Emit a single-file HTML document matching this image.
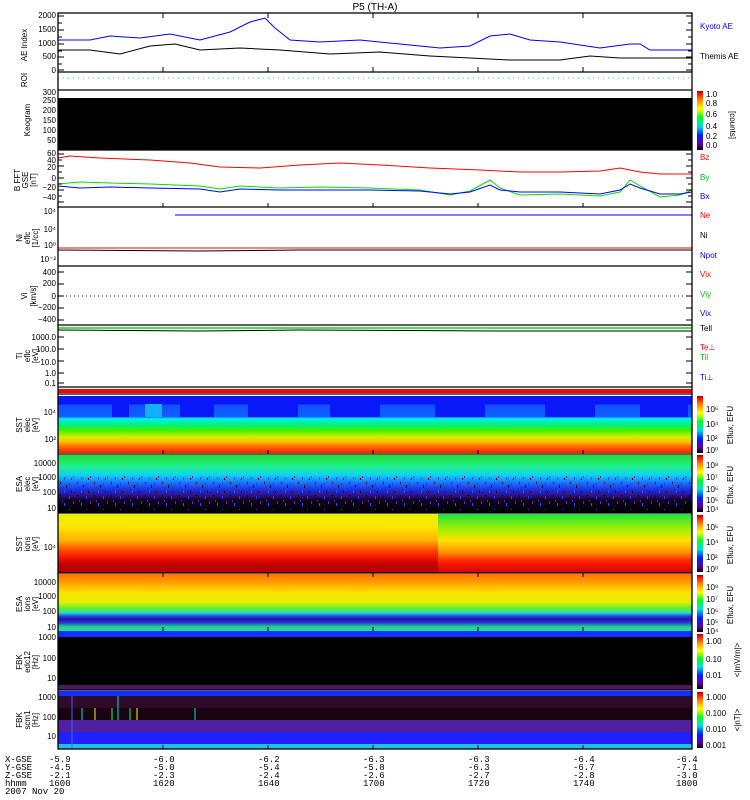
<!DOCTYPE html><html><head><style>body{margin:0;background:#fff}svg{display:block;font-family:"Liberation Sans",sans-serif}</style></head><body>
<svg width="750" height="800" viewBox="0 0 750 800" xmlns="http://www.w3.org/2000/svg">
<defs>
<linearGradient id="cb" x1="0" y1="1" x2="0" y2="0"><stop offset="0" stop-color="#000"/><stop offset=".1" stop-color="#6000a0"/><stop offset=".25" stop-color="#0020ff"/><stop offset=".4" stop-color="#00e0e0"/><stop offset=".55" stop-color="#00ff20"/><stop offset=".7" stop-color="#ffff00"/><stop offset=".85" stop-color="#ff8000"/><stop offset=".97" stop-color="#ff0000"/><stop offset="1" stop-color="#800000"/></linearGradient>
<linearGradient id="sst1" x1="0" y1="0" x2="0" y2="1"><stop offset="0" stop-color="#0818f8"/><stop offset=".14" stop-color="#0818f8"/><stop offset=".16" stop-color="#1050ff"/><stop offset=".36" stop-color="#1060ff"/><stop offset=".4" stop-color="#00f0f0"/><stop offset=".5" stop-color="#00f080"/><stop offset=".6" stop-color="#40f000"/><stop offset=".72" stop-color="#d0f000"/><stop offset=".8" stop-color="#ffc000"/><stop offset=".9" stop-color="#ff6000"/><stop offset="1" stop-color="#ff2000"/></linearGradient>
<linearGradient id="esa1" x1="0" y1="0" x2="0" y2="1"><stop offset="0" stop-color="#20e030"/><stop offset=".2" stop-color="#20f090"/><stop offset=".35" stop-color="#10d0f0"/><stop offset=".48" stop-color="#2070ff"/><stop offset=".6" stop-color="#1830e0"/><stop offset=".7" stop-color="#301080"/><stop offset=".78" stop-color="#100420"/><stop offset="1" stop-color="#000"/></linearGradient>
<linearGradient id="sst2" x1="0" y1="0" x2="0" y2="1"><stop offset="0" stop-color="#e8f000"/><stop offset=".2" stop-color="#ffe800"/><stop offset=".45" stop-color="#ffb000"/><stop offset=".6" stop-color="#ff5000"/><stop offset=".75" stop-color="#f01000"/><stop offset=".85" stop-color="#c00000"/><stop offset="1" stop-color="#b00000"/></linearGradient>
<linearGradient id="sst2b" x1="0" y1="0" x2="0" y2="1"><stop offset="0" stop-color="#20e040"/><stop offset=".25" stop-color="#a0f000"/><stop offset=".45" stop-color="#ffe000"/><stop offset=".65" stop-color="#ff9000"/><stop offset=".8" stop-color="#ff2000"/><stop offset="1" stop-color="#d00000"/></linearGradient>
<linearGradient id="esa2" x1="0" y1="0" x2="0" y2="1"><stop offset="0" stop-color="#ff7000"/><stop offset=".15" stop-color="#ffa000"/><stop offset=".32" stop-color="#ffe000"/><stop offset=".5" stop-color="#e0f000"/><stop offset=".6" stop-color="#60f030"/><stop offset=".68" stop-color="#20e0c0"/><stop offset=".74" stop-color="#2040ff"/><stop offset=".8" stop-color="#301080"/><stop offset=".86" stop-color="#2040ff"/><stop offset=".93" stop-color="#20e060"/><stop offset="1" stop-color="#20d0d0"/></linearGradient>
<pattern id="spk" width="17" height="13" patternUnits="userSpaceOnUse">
<rect x="1" y="2" width="1" height="3" fill="#2040ff"/><rect x="5" y="7" width="1" height="3" fill="#6020c0"/><rect x="9" y="1" width="1" height="2" fill="#000"/><rect x="13" y="9" width="1" height="3" fill="#2050ff"/><rect x="15" y="4" width="1" height="3" fill="#000"/><rect x="11" y="6" width="1" height="2" fill="#5020b0"/><rect x="3" y="10" width="1" height="2" fill="#000"/>
</pattern>
</defs>
<text x="375" y="10" font-size="10" text-anchor="middle">P5 (TH-A)</text>
<polyline fill="none" stroke="#0000ff" points="58,40 90,40 110,36 140,38 170,34 200,40 230,32 250,22 265,18 275,28 290,40 320,42 360,40 400,44 440,48 470,46 490,36 510,34 530,40 560,42 600,48 630,44 640,44 650,50 692,50"/>
<polyline fill="none" stroke="#000" points="58,50 90,50 120,54 150,46 175,44 200,50 240,48 280,50 330,54 380,52 430,56 470,58 510,60 560,60 590,56 620,58 640,58 692,58"/>
<line x1="58" y1="78" x2="692" y2="78" stroke="#00e0a0" stroke-dasharray="1,4"/>
<rect x="58" y="98" width="634" height="52" fill="#000"/>
<polyline fill="none" stroke="#ff0000" points="58,158 70,156 100,158 150,160 190,163 220,167 260,168 300,165 340,163 380,165 430,168 480,170 520,172 560,172 600,171 620,168 640,172 660,174 692,174"/>
<polyline fill="none" stroke="#00e000" points="58,184 80,182 110,183 150,184 200,186 220,189 240,186 280,188 320,187 370,188 420,190 450,195 470,191 490,180 500,188 520,195 560,194 600,196 620,192 630,180 640,186 660,197 680,195 692,190"/>
<polyline fill="none" stroke="#0000ff" points="58,186 80,188 110,187 150,188 200,189 220,192 240,189 280,190 320,190 370,190 420,191 450,194 470,192 490,185 500,190 520,192 560,192 600,194 620,190 630,184 640,188 660,194 680,194 692,192"/>
<line x1="175" y1="215" x2="692" y2="215" stroke="#0000ff"/>
<line x1="58" y1="248" x2="692" y2="248" stroke="#ff0000"/>
<polyline fill="none" stroke="#000" points="58,250 200,251 300,250 500,250 692,250"/>
<line x1="58" y1="296" x2="692" y2="296" stroke="#000" stroke-dasharray="1,3"/>
<polyline fill="none" stroke="#000" points="58,330 200,331 300,330 500,331 692,331"/>
<line x1="58" y1="328" x2="692" y2="328" stroke="#00e000" stroke-width="1.5"/>
<rect x="58" y="389" width="634" height="4" fill="#ff0000"/>
<rect x="58" y="396" width="634" height="57" fill="url(#sst1)"/>
<g fill="#0818f8"><rect x="112" y="404" width="17" height="13"/><rect x="180" y="404" width="34" height="13"/><rect x="248" y="404" width="50" height="13"/><rect x="330" y="404" width="50" height="13"/><rect x="435" y="404" width="50" height="13"/><rect x="545" y="404" width="50" height="13"/><rect x="640" y="404" width="48" height="13"/></g>
<rect x="145" y="404" width="17" height="13" fill="#10b0ff"/>
<rect x="58" y="455" width="634" height="58" fill="url(#esa1)"/>
<rect x="58" y="476" width="634" height="34" fill="url(#spk)"/>
<rect x="58" y="514" width="380" height="59" fill="url(#sst2)"/>
<rect x="438" y="514" width="254" height="59" fill="url(#sst2b)"/>
<rect x="58" y="574" width="634" height="57" fill="url(#esa2)"/>
<rect x="58" y="631" width="634" height="6" fill="#1030ff"/>
<rect x="58" y="637" width="634" height="48" fill="#000"/>
<rect x="58" y="685" width="634" height="5" fill="#501860"/>
<rect x="58" y="691" width="634" height="5" fill="#1030ff"/>
<rect x="58" y="696" width="634" height="12" fill="#300a28"/>
<rect x="58" y="708" width="634" height="12" fill="#180410"/>
<rect x="58" y="720" width="634" height="12" fill="#5020a0"/>
<rect x="58" y="732" width="634" height="12" fill="#2020ff"/>
<rect x="58" y="744" width="634" height="5" fill="#20c0e0"/>
<g><line x1="82" y1="708" x2="82" y2="720" stroke="#00e0e0"/><line x1="95" y1="708" x2="95" y2="720" stroke="#e0ff00"/><line x1="112" y1="708" x2="112" y2="720" stroke="#00ff80"/><line x1="118" y1="696" x2="118" y2="720" stroke="#00e0e0"/><line x1="130" y1="708" x2="130" y2="720" stroke="#00ff60"/><line x1="137" y1="708" x2="137" y2="720" stroke="#ffff00"/><line x1="195" y1="708" x2="195" y2="720" stroke="#00e0e0"/><line x1="72" y1="696" x2="72" y2="749" stroke="#4060ff"/></g>
<g fill="none" stroke="#000" stroke-width="1.3">
<rect x="58" y="13" width="634" height="736"/>
<line x1="58" y1="72" x2="692" y2="72"/><line x1="58" y1="90" x2="692" y2="90"/><line x1="58" y1="150" x2="692" y2="150"/><line x1="58" y1="207" x2="692" y2="207"/><line x1="58" y1="266" x2="692" y2="266"/><line x1="58" y1="325" x2="692" y2="325"/><line x1="58" y1="387" x2="692" y2="387"/><line x1="58" y1="394" x2="692" y2="394"/><line x1="58" y1="454" x2="692" y2="454"/><line x1="58" y1="513" x2="692" y2="513"/><line x1="58" y1="573" x2="692" y2="573"/><line x1="58" y1="690" x2="692" y2="690"/>
</g>
<g stroke="#000">
<path d="M163,13v5M268,13v5M373,13v5M478,13v5M583,13v5M163,72v-5M268,72v-5M373,72v-5M478,72v-5M583,72v-5M163,207v-4M268,207v-4M373,207v-4M478,207v-4M583,207v-4M163,454v-4M268,454v-4M373,454v-4M478,454v-4M583,454v-4M163,573v4M268,573v4M373,573v4M478,573v4M583,573v4M163,631v-4M268,631v-4M373,631v-4M478,631v-4M583,631v-4M163,749v-4M268,749v-4M373,749v-4M478,749v-4M583,749v-4"/>
<path d="M58,16h6M58,23h4M58,30h6M58,37h4M58,44h6M58,51h4M58,57h6M58,64h4M58,70h6M692,16h-6M692,23h-4M692,30h-6M692,37h-4M692,44h-6M692,51h-4M692,57h-6M692,64h-4M692,70h-6 M58,154h6M58,160h4M58,166h6M58,172h4M58,178h6M58,184h4M58,190h6M58,196h4M58,202h6M692,154h-6M692,160h-4M692,166h-6M692,172h-4M692,178h-6M692,184h-4M692,190h-6M692,196h-4M692,202h-6 M58,272h6M58,284h6M58,296h6M58,308h6M58,320h6M692,272h-6M692,284h-6M692,296h-6M692,308h-6M692,320h-6 M58,337h6M58,349h6M58,361h6M58,373h6M58,383h6M692,337h-6M692,349h-6M692,361h-6M692,373h-6M692,383h-6"/>
</g>
<g>
<rect x="697" y="91" width="6" height="59" fill="url(#cb)"/>
<rect x="697" y="396" width="6" height="57" fill="url(#cb)"/>
<rect x="697" y="455" width="6" height="57" fill="url(#cb)"/>
<rect x="697" y="515" width="6" height="57" fill="url(#cb)"/>
<rect x="697" y="575" width="6" height="57" fill="url(#cb)"/>
<rect x="697" y="634" width="6" height="55" fill="url(#cb)"/>
<rect x="697" y="692" width="6" height="56" fill="url(#cb)"/>
</g>
<g font-size="8">
<text x="700" y="29" fill="#0000ff">Kyoto AE</text>
<text x="700" y="59">Themis AE</text>
<text x="700" y="160" fill="#ff0000">Bz</text>
<text x="700" y="180" fill="#00c000">By</text>
<text x="700" y="199" fill="#0000ff">Bx</text>
<text x="700" y="218" fill="#ff0000">Ne</text>
<text x="700" y="238">Ni</text>
<text x="700" y="258" fill="#0000ff">Npot</text>
<text x="700" y="277" fill="#ff0000">Vix</text>
<text x="700" y="297" fill="#00c000">Viy</text>
<text x="700" y="316" fill="#0000ff">Vix</text>
<text x="700" y="331">Tell</text>
<text x="700" y="350" fill="#ff0000">Te⊥</text>
<text x="700" y="360" fill="#00c000">Til</text>
<text x="700" y="380" fill="#0000ff">Ti⊥</text>
<text x="706" y="97">1.0</text><text x="706" y="106">0.8</text><text x="706" y="117">0.6</text><text x="706" y="129">0.4</text><text x="706" y="139">0.2</text><text x="706" y="148">0.0</text>
<text x="706" y="412">10⁶</text><text x="706" y="427">10⁴</text><text x="706" y="441">10²</text><text x="706" y="453">10⁰</text>
<text x="706" y="468">10⁸</text><text x="706" y="480">10⁷</text><text x="706" y="492">10⁶</text><text x="706" y="503">10⁵</text><text x="706" y="512">10⁴</text>
<text x="706" y="530">10⁶</text><text x="706" y="545">10⁴</text><text x="706" y="560">10²</text><text x="706" y="572">10⁰</text>
<text x="706" y="590">10⁸</text><text x="706" y="602">10⁷</text><text x="706" y="614">10⁶</text><text x="706" y="625">10⁵</text><text x="706" y="634">10⁴</text>
<text x="706" y="644">1.00</text><text x="706" y="662">0.10</text><text x="706" y="678">0.01</text>
<text x="706" y="700">1.000</text><text x="706" y="716">0.100</text><text x="706" y="732">0.010</text><text x="706" y="748">0.001</text>
</g>
<g font-size="8" text-anchor="middle">
<text transform="translate(730,125) rotate(90)">[counts]</text>
<text transform="translate(733,425) rotate(-90)">Eflux, EFU</text>
<text transform="translate(733,485) rotate(-90)">Eflux, EFU</text>
<text transform="translate(733,545) rotate(-90)">Eflux, EFU</text>
<text transform="translate(733,605) rotate(-90)">Eflux, EFU</text>
<text transform="translate(740,660) rotate(-90)">&lt;|mV/m|&gt;</text>
<text transform="translate(740,720) rotate(-90)">&lt;|nT|&gt;</text>
</g>
<g font-size="8" text-anchor="end">
<text x="56" y="18">2000</text><text x="56" y="32">1500</text><text x="56" y="46">1000</text><text x="56" y="59">500</text><text x="56" y="73">0</text>
<text x="56" y="95">300</text><text x="56" y="103">250</text><text x="56" y="113">200</text><text x="56" y="123">150</text><text x="56" y="133">100</text><text x="56" y="143">50</text>
<text x="56" y="156">60</text><text x="56" y="163">40</text><text x="56" y="170">20</text><text x="56" y="181">0</text><text x="56" y="190">−20</text><text x="56" y="200">−40</text>
<text x="56" y="214">10⁴</text><text x="56" y="232">10⁴</text><text x="56" y="248">10⁰</text><text x="56" y="262">10⁻²</text>
<text x="56" y="275">400</text><text x="56" y="286">200</text><text x="56" y="299">0</text><text x="56" y="310">−200</text><text x="56" y="322">−400</text>
<text x="56" y="340">1000.0</text><text x="56" y="352">100.0</text><text x="56" y="365">10.0</text><text x="56" y="376">1.0</text><text x="56" y="386">0.1</text>
<text x="56" y="415">10⁴</text><text x="56" y="442">10²</text>
<text x="56" y="466">10000</text><text x="56" y="480">1000</text><text x="56" y="495">100</text><text x="56" y="511">10</text>
<text x="56" y="550">10⁴</text>
<text x="56" y="585">10000</text><text x="56" y="599">1000</text><text x="56" y="614">100</text><text x="56" y="630">10</text>
<text x="56" y="640">1000</text><text x="56" y="661">100</text><text x="56" y="681">10</text>
<text x="56" y="700">1000</text><text x="56" y="720">100</text><text x="56" y="739">10</text>
</g>
<g font-size="8" text-anchor="middle">
<text transform="translate(27,45) rotate(-90)">AE Index</text>
<text transform="translate(27,80) rotate(-90)">ROI</text>
<text transform="translate(30,120) rotate(-90)">Keogram</text>
<text transform="translate(20,180) rotate(-90)">B FFT</text>
<text transform="translate(28,180) rotate(-90)">GSE</text>
<text transform="translate(36,180) rotate(-90)">[nT]</text>
<text transform="translate(22,238) rotate(-90)">Ni</text>
<text transform="translate(30,238) rotate(-90)">eflc</text>
<text transform="translate(38,238) rotate(-90)">[1/cc]</text>
<text transform="translate(27,296) rotate(-90)">Vi</text>
<text transform="translate(36,296) rotate(-90)">[km/s]</text>
<text transform="translate(22,356) rotate(-90)">Ti</text>
<text transform="translate(30,356) rotate(-90)">eflc</text>
<text transform="translate(38,356) rotate(-90)">[eV]</text>
<text transform="translate(22,425) rotate(-90)">SST</text><text transform="translate(30,425) rotate(-90)">elec</text><text transform="translate(38,425) rotate(-90)">[eV]</text>
<text transform="translate(22,484) rotate(-90)">ESA</text><text transform="translate(30,484) rotate(-90)">elec</text><text transform="translate(38,484) rotate(-90)">[eV]</text>
<text transform="translate(22,544) rotate(-90)">SST</text><text transform="translate(30,544) rotate(-90)">ions</text><text transform="translate(38,544) rotate(-90)">[eV]</text>
<text transform="translate(22,604) rotate(-90)">ESA</text><text transform="translate(30,604) rotate(-90)">ions</text><text transform="translate(38,604) rotate(-90)">[eV]</text>
<text transform="translate(22,662) rotate(-90)">FBK</text><text transform="translate(30,662) rotate(-90)">edc12</text><text transform="translate(38,662) rotate(-90)">[Hz]</text>
<text transform="translate(22,720) rotate(-90)">FBK</text><text transform="translate(30,720) rotate(-90)">scm1</text><text transform="translate(38,720) rotate(-90)">[Hz]</text>
</g>
<g font-size="9" font-family="Liberation Mono,monospace">
<text x="5" y="762">X-GSE</text><text x="5" y="770">Y-GSE</text><text x="5" y="778">Z-GSE</text><text x="5" y="786">hhmm</text><text x="5" y="794">2007 Nov 20</text>
<text x="49" y="762">-5.9</text><text x="49" y="770">-4.5</text><text x="49" y="778">-2.1</text><text x="49" y="786">1600</text>
<text x="153" y="762">-6.0</text><text x="153" y="770">-5.0</text><text x="153" y="778">-2.3</text><text x="153" y="786">1620</text>
<text x="258" y="762">-6.2</text><text x="258" y="770">-5.4</text><text x="258" y="778">-2.4</text><text x="258" y="786">1640</text>
<text x="363" y="762">-6.3</text><text x="363" y="770">-5.8</text><text x="363" y="778">-2.6</text><text x="363" y="786">1700</text>
<text x="468" y="762">-6.3</text><text x="468" y="770">-6.3</text><text x="468" y="778">-2.7</text><text x="468" y="786">1720</text>
<text x="573" y="762">-6.4</text><text x="573" y="770">-6.7</text><text x="573" y="778">-2.8</text><text x="573" y="786">1740</text>
<text x="676" y="762">-6.4</text><text x="676" y="770">-7.1</text><text x="676" y="778">-3.0</text><text x="676" y="786">1800</text>
</g>
</svg>
</body></html>
